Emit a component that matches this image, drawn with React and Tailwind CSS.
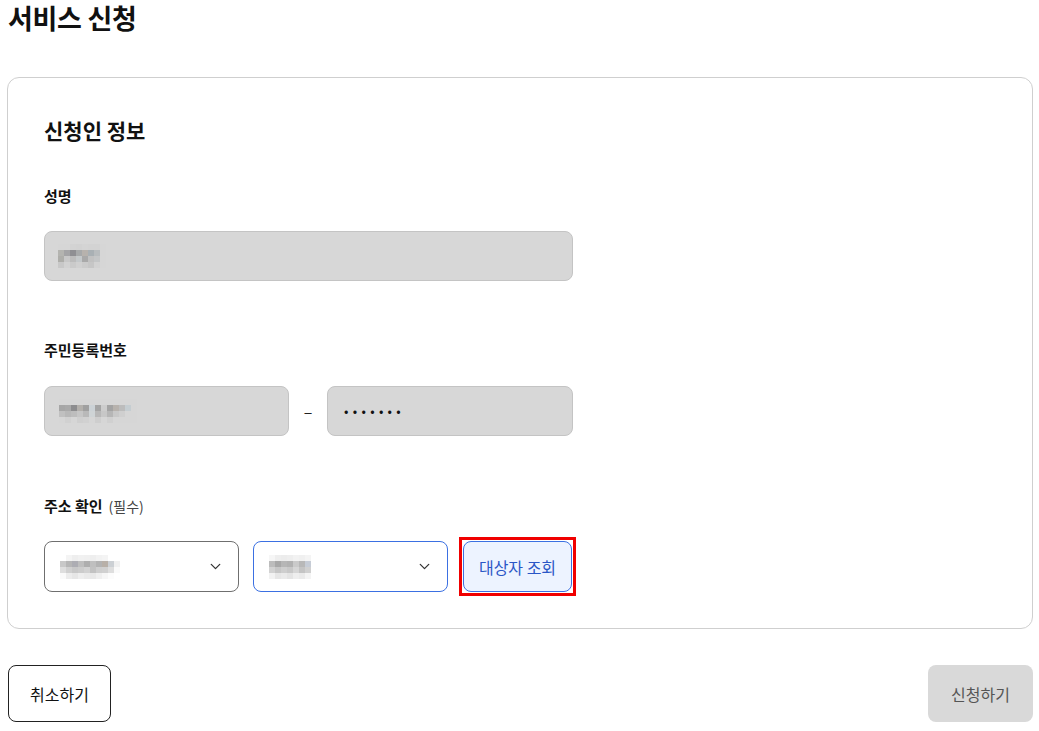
import { ChevronDown } from 'lucide-react';

const FONT = { fontFamily: '"Noto Sans CJK KR", "Noto Sans", sans-serif' };

// pixelated (masked) value, one row of colours per line
function Mosaic({ rows }) {
  return (
    <div className="flex flex-col">
      {rows.map((row, i) => (
        <div key={i} className="flex">
          {row.map((c, j) => (
            <div key={j} className="w-[6px] h-[6px]" style={{ background: c }} />
          ))}
        </div>
      ))}
    </div>
  );
}

const NAME_MASK = [
  ['#d6d6d6', '#d6d6d6', '#d3d3d3', '#d2d2d2', '#d4d4d4', '#d3d3d3', '#d3d3d3', '#d6d6d6'],
  ['#b4b4b0', '#a4a4a6', '#8f8f93', '#a7a9aa', '#b7b2ad', '#a9b0b4', '#b8bcbe', '#d6d6d6'],
  ['#aeaeaa', '#c8c8c8', '#bcbcbc', '#c4c8ca', '#a9a9a9', '#c1c1c1', '#c4c6c7', '#d6d6d6'],
  ['#c8c8c8', '#d2d2d2', '#cacaca', '#d0d0d0', '#cbcbcb', '#c6c6c6', '#d2d2d2', '#d6d6d6'],
];

const RRN_MASK = [
  ['#d6d6d6', '#d6d6d6', '#d6d6d6', '#d6d6d6', '#d6d6d6', '#d6d6d6', '#d6d6d6', '#d6d6d6', '#d6d6d6', '#d6d6d6', '#d6d6d6', '#d6d6d6', '#d6d6d6'],
  ['#a6a6a6', '#a9a9a9', '#8d8d8f', '#b3b0ac', '#a0a0a0', '#ccd2d6', '#a4a4a4', '#cccccc', '#a3a3a3', '#b7b2ad', '#bcbcbc', '#c5cdd1', '#d6d6d6'],
  ['#c0c0c0', '#b8b8b8', '#bdbdbd', '#c6c6c6', '#b9b9b9', '#cfd4d6', '#b8b8b8', '#c7c7c7', '#b6b6b6', '#c8c8c8', '#cfcfcf', '#d6d6d6', '#d6d6d6'],
  ['#d6d6d6', '#d1d1d1', '#d6d6d6', '#cfcfcf', '#d1d1d1', '#d6d6d6', '#cecece', '#d6d6d6', '#d0d0d0', '#d6d6d6', '#d6d6d6', '#d6d6d6', '#d6d6d6'],
];

const SIDO_MASK = [
  ['#ffffff', '#f4f4f4', '#eeeeee', '#f1f1f1', '#f0f0f0', '#eeeeee', '#f2f2f2', '#f4f4f4', '#ffffff', '#ffffff'],
  ['#c8c8c8', '#b6b6b6', '#adadb3', '#bebebe', '#aeaeae', '#bfbfbf', '#b3b3b3', '#b8b0a8', '#ccd0d4', '#f0f0f0'],
  ['#dedede', '#d0d0d0', '#c8c8c8', '#cccccc', '#d2d2d2', '#c2c2c2', '#cecece', '#d0d0d0', '#dedede', '#fafafa'],
  ['#fafafa', '#ececec', '#e6e6e6', '#eeeeee', '#eaeaea', '#e8e8e8', '#efefef', '#f6f6f6', '#fcfcfc', '#ffffff'],
];

const SIGUNGU_MASK = [
  ['#f6f6f6', '#eeeeee', '#ececec', '#eeeeee', '#f2f2f2', '#f0f0f0', '#f4f4f4', '#ffffff'],
  ['#bcbcbc', '#a8a8a8', '#b6b6b6', '#b2b2b2', '#cacaca', '#b8b8b8', '#c6ccd6', '#ffffff'],
  ['#d2d2d2', '#c6c6c6', '#cecece', '#c8c8c8', '#d6d6d6', '#c4c4c4', '#d0d0d0', '#ffffff'],
  ['#f2f2f2', '#e6e6e6', '#eaeaea', '#e4e4e4', '#eeeeee', '#eaeaea', '#f4f4f4', '#ffffff'],
];

function FieldLabel({ children }) {
  return <div className="text-[15px] leading-[22px] font-bold text-[#111]">{children}</div>;
}

function SelectBox({ mask, focused }) {
  return (
    <div
      className={`w-[195px] h-[51px] rounded-[8px] bg-white flex items-center justify-between pl-[15px] pr-[14px] border ${
        focused ? 'border-[#3b70e2]' : 'border-[#6f6f6f]'
      }`}
    >
      <Mosaic rows={mask} />
      <ChevronDown size={17} strokeWidth={1.8} className="text-[#333]" />
    </div>
  );
}

export default function App() {
  return (
    <div className="w-[1039px] min-h-[731px] bg-white text-[#111] pl-[7px] pr-[6px]" style={FONT}>
      <h1 className="pl-[1px] text-[27px] leading-[36px] font-bold tracking-[-0.3px]">서비스 신청</h1>

      {/* 신청인 정보 카드 */}
      <section className="mt-[41px] border border-[#cfcfcf] rounded-[12px] pl-[36px] pt-[38px] pb-[32px]">
        <h2 className="text-[21px] leading-[28px] font-bold">신청인 정보</h2>

        <div className="mt-[41px]">
          <FieldLabel>성명</FieldLabel>
          <div className="mt-[24px] w-[529px] h-[50px] rounded-[8px] bg-[#d7d7d7] border border-[#c4c4c4] flex items-center pl-[13px]">
            <Mosaic rows={NAME_MASK} />
          </div>
        </div>

        <div className="mt-[58px]">
          <FieldLabel>주민등록번호</FieldLabel>
          <div className="mt-[25px] flex items-center">
            <div className="w-[245px] h-[50px] rounded-[8px] bg-[#d7d7d7] border border-[#c4c4c4] flex items-center pl-[14px]">
              <Mosaic rows={RRN_MASK} />
            </div>
            <div className="w-[38px] text-center text-[16px] text-[#222]">–</div>
            <div className="w-[246px] h-[50px] rounded-[8px] bg-[#d7d7d7] border border-[#c4c4c4] flex items-center pl-[16px] text-[13px] tracking-[4.3px] text-[#111]">
              •••••••
            </div>
          </div>
        </div>

        <div className="mt-[59px]">
          <div className="flex items-baseline gap-[6px]">
            <FieldLabel>주소 확인</FieldLabel>
            <span className="text-[14px] text-[#444]">(필수)</span>
          </div>
          <div className="mt-[20px] flex items-center">
            <SelectBox mask={SIDO_MASK} />
            <div className="ml-[14px]">
              <SelectBox mask={SIGUNGU_MASK} focused />
            </div>
            <div className="ml-[11px] border-[3px] border-[#f00000] p-[1px]">
              <button className="w-[109px] h-[51px] rounded-[8px] bg-[#edf3ff] border border-[#3b70e2] text-[16px] text-[#2a56c6]">
                대상자 조회
              </button>
            </div>
          </div>
        </div>
      </section>

      {/* 하단 버튼 */}
      <div className="mt-[36px] flex justify-between pl-[1px]">
        <button className="w-[103px] h-[57px] rounded-[8px] border border-[#222] bg-white text-[16px] text-[#111]">
          취소하기
        </button>
        <button className="w-[105px] h-[57px] rounded-[8px] bg-[#d9d9d9] text-[16px] text-[#555]">
          신청하기
        </button>
      </div>
    </div>
  );
}
